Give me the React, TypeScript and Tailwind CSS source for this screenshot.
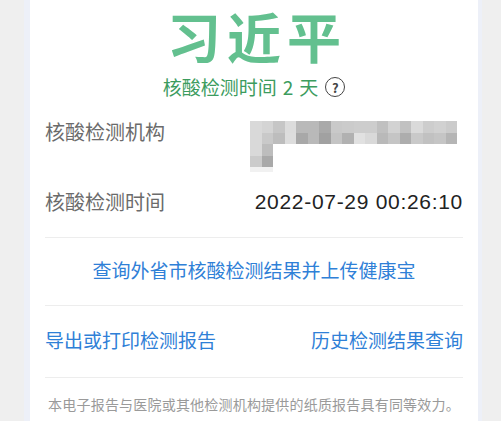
import { CSSProperties } from "react";

const cjk = { fontFamily: '"Noto Sans CJK SC", "Noto Sans", sans-serif' } as CSSProperties;

// mosaic over the testing institution's name, 18 cells per row
const mosaicTop = [
  "bg-[#d9d9d9]", "bg-[#d4d4d4]", "bg-[#c6c6c6]", "bg-[#dcdcdc]", "bg-[#b9b9b9]", "bg-[#b9b9b9]",
  "bg-[#a9a9a9]", "bg-[#c9c9c9]", "bg-[#cbcbcb]", "bg-[#cdcdcd]", "bg-[#cdcdcd]", "bg-[#c0c0c0]",
  "bg-[#d2d2d2]", "bg-[#c1c1c1]", "bg-[#dadada]", "bg-[#cdcdcd]", "bg-[#d1d1d1]", "bg-[#cbcbcb]",
];
const mosaicBottom = [
  "bg-[#d9d9d9]", "bg-[#c9c9c9]", "bg-[#bdbdbd]", "bg-[#dddddd]", "bg-[#a8a8a8]", "bg-[#b9b9b9]",
  "bg-[#a1a1a1]", "bg-[#c4c4c4]", "bg-[#b1b1b1]", "bg-[#e1e1e1]", "bg-[#d9d9d9]", "bg-[#b9b9b9]",
  "bg-[#c5c5c5]", "bg-[#adadad]", "bg-[#c9c9c9]", "bg-[#c1c1c1]", "bg-[#c5c5c5]", "bg-[#b5b5b5]",
];
const mosaicTail = [
  ["bg-[#d9d9d9]", "bg-[#bdbdbd]"],
  ["bg-[#cbcbcb]", "bg-[#a9a9a9]"],
];

function Mosaic() {
  return (
    <div className="mr-[6px] mt-px flex flex-col blur-[0.4px]">
      <div className="flex">
        {mosaicTop.map((c, i) => (
          <div key={i} className={`h-[11.5px] w-[11.5px] ${c}`} />
        ))}
      </div>
      <div className="flex">
        {mosaicBottom.map((c, i) => (
          <div key={i} className={`h-[11.5px] w-[11.5px] ${c}`} />
        ))}
      </div>
      {mosaicTail.map((row, r) => (
        <div key={r} className="flex">
          {row.map((c, i) => (
            <div key={i} className={`h-[11.5px] w-[11.5px] ${c}`} />
          ))}
        </div>
      ))}
      <div className="flex">
        <div className="h-[5px] w-[23px] bg-[#f1f1f1]" />
      </div>
    </div>
  );
}

export default function App() {
  return (
    <div className="h-[421px] w-full overflow-hidden bg-[#efefef] pl-[24px] pr-[19px]" style={cjk}>
      <div className="flex h-full flex-col border-l-[6px] border-r-[4px] border-[#edf0f8] bg-white">
        <div className="flex h-[74px] items-center justify-center pb-[2px]">
          <span className="pl-[6px] text-[54px] font-bold leading-[58px] tracking-[6px] text-[#63c08f]">
            习近平
          </span>
        </div>
        <div className="flex h-[26px] items-center justify-center text-[19px] leading-[24px] text-[#3c9c5e]">
          <span>核酸检测时间</span>
          <span className="ml-[6px]">2</span>
          <span className="ml-[6px]">天</span>
          <span className="ml-[7px] flex h-[20px] w-[20px] items-center justify-center rounded-full border-[1.5px] border-[#444] text-[13px] font-bold leading-none text-[#444]">
            ?
          </span>
        </div>

        <div className="px-[15px]">
          <div className="flex items-start justify-between pt-[20px]">
            <span className="h-[24px] text-[20px] leading-[24px] text-[#6b6b6b]">核酸检测机构</span>
            <Mosaic />
          </div>
          <div className="flex items-center justify-between pt-[18px] pb-[23px]">
            <span className="h-[24px] text-[20px] leading-[24px] text-[#6b6b6b]">核酸检测时间</span>
            <span
              className="text-[21px] leading-[24px] tracking-[0.7px] text-[#222]"
              style={{ fontFamily: '"Liberation Sans", Arial, sans-serif' }}
            >
              2022-07-29 00:26:10
            </span>
          </div>
          <div className="h-px bg-[#ededed]" />
          <div className="flex h-[67px] items-center justify-center pb-[3px] text-[19px] text-[#2f80d7]">
            查询外省市核酸检测结果并上传健康宝
          </div>
          <div className="h-px bg-[#ededed]" />
          <div className="flex h-[71px] items-center justify-between pb-[3px] text-[19px] text-[#2f80d7]">
            <span>导出或打印检测报告</span>
            <span>历史检测结果查询</span>
          </div>
          <div className="h-px bg-[#ededed]" />
          <div className="pt-[16px] text-center text-[14px] leading-[20px] tracking-[0.2px] text-[#9a9a9a]">
            本电子报告与医院或其他检测机构提供的纸质报告具有同等效力。
          </div>
        </div>
      </div>
    </div>
  );
}
